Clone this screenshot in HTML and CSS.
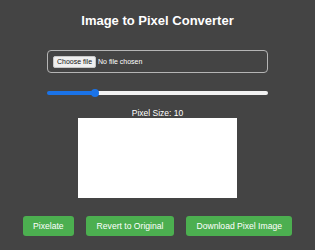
FILE: index.html
```html
<!DOCTYPE html>
<html lang="en">
<head>
    <meta charset="UTF-8">
    <meta name="viewport" content="width=device-width, initial-scale=1.0">
    <title>Image to Pixel Converter</title>
    <link rel="stylesheet" href="styles.css">
</head>
<body>
    <h1 class="title">Image to Pixel Converter</h1>

    <div class="panel">
        <!-- File picker -->
        <label class="file-box">
            <span class="file-btn">Choose file</span>
            <span class="file-name">No file chosen</span>
        </label>

        <!-- Pixel size slider -->
        <input type="range" class="slider" min="1" max="45" value="10">
        <div class="size-label">Pixel Size: 10</div>

        <canvas class="preview" width="159" height="80"></canvas>
    </div>

    <div class="actions">
        <button type="button" class="btn">Pixelate</button>
        <button type="button" class="btn">Revert to Original</button>
        <button type="button" class="btn">Download Pixel Image</button>
    </div>
</body>
</html>
```

FILE: styles.css
```css
body {
    font-family: "Liberation Sans", Arial, sans-serif;
    margin: 0;
    padding: 13px 0 0;
    background-color: #444444;
    color: #fff;
}
.title {
    margin: 0;
    font-size: 13px;
    line-height: 16px;
    text-align: center;
    font-weight: bold;
}
.panel {
    width: 221px;
    margin: 0 auto;
}
/* File picker */
.file-box {
    display: flex;
    align-items: center;
    box-sizing: border-box;
    height: 23px;
    margin-top: 21px;
    padding: 0 5px;
    border: 1px solid #b5b5b5;
    border-radius: 4px;
    font-size: 7px;
}
.file-btn {
    display: block;
    line-height: 10px;
    padding: 0 3px;
    background: #efefef;
    color: #111;
    border: 1px solid #c8c8c8;
    border-radius: 2px;
}
.file-name {
    margin-left: 2px;
}
/* Slider */
.slider {
    -webkit-appearance: none;
    appearance: none;
    display: block;
    width: 100%;
    height: 4px;
    margin: 18px 0 0;
    border-radius: 2px;
    background: linear-gradient(to right, #1a73e8 0 21.5%, #f2f2f2 21.5% 100%);
    outline: none;
}
.slider::-webkit-slider-thumb {
    -webkit-appearance: none;
    width: 8px;
    height: 8px;
    border-radius: 50%;
    background: #1a73e8;
}
.size-label {
    margin-top: 13px;
    font-size: 8.5px;
    line-height: 10px;
    text-align: center;
}
.preview {
    display: block;
    width: 159px;
    height: 80px;
    margin: 0 auto;
    background: #fff;
}
/* Buttons */
.actions {
    display: flex;
    justify-content: center;
    gap: 12px;
    margin-top: 18px;
}
.btn {
    font-family: inherit;
    font-size: 8.6px;
    line-height: 10px;
    padding: 5px 10.5px;
    background-color: #4caf50;
    color: white;
    border: none;
    border-radius: 3px;
    cursor: pointer;
}
.btn:hover {
    background-color: #45a049;
}
```
